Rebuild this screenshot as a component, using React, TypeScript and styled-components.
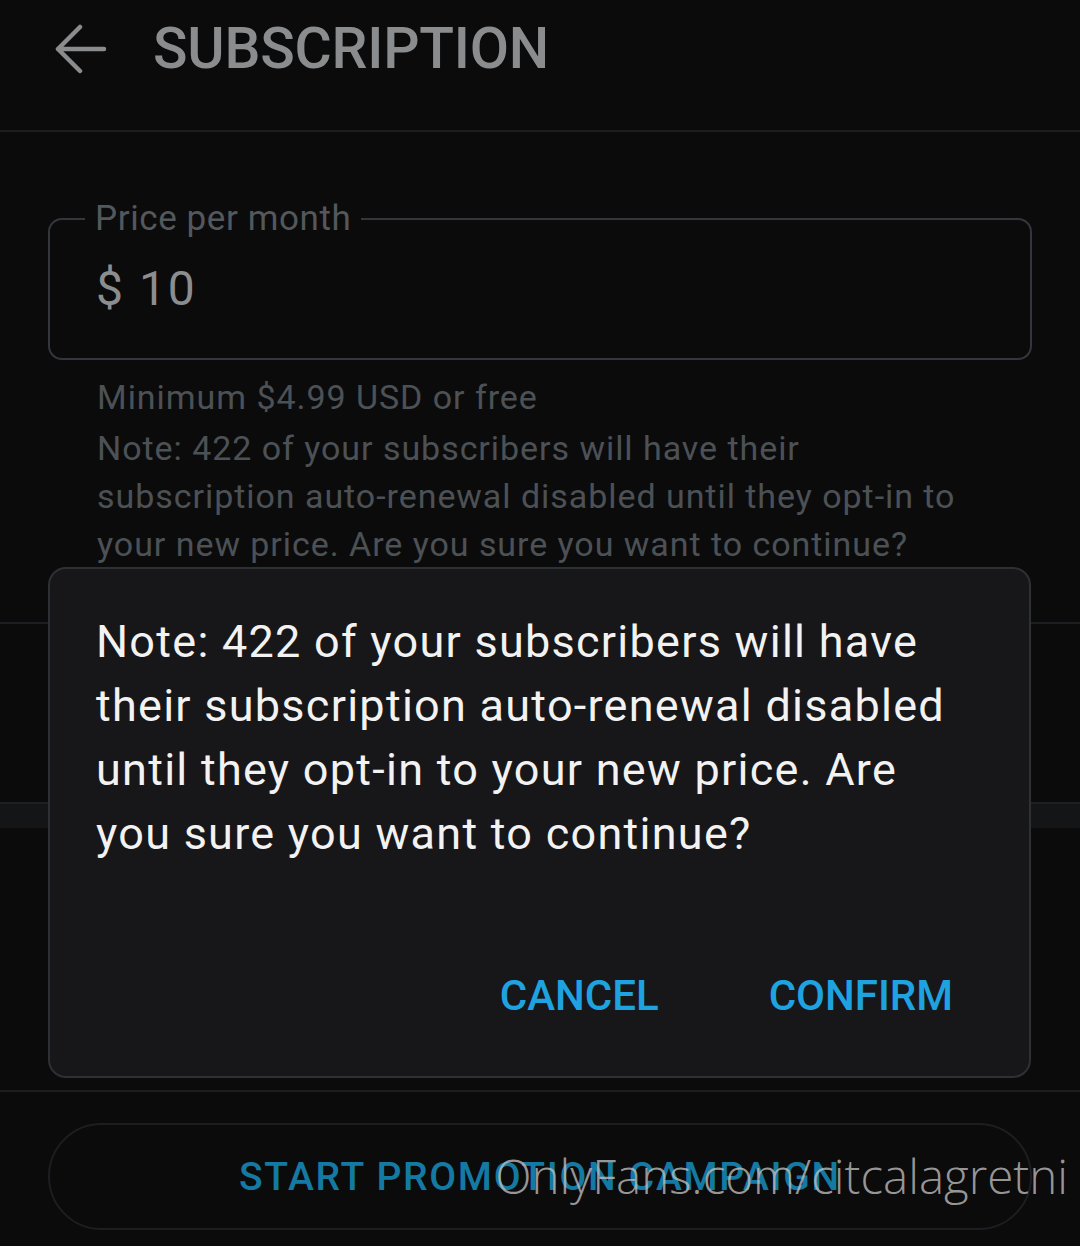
import React from "react";
import styled, { createGlobalStyle } from "styled-components";

const Global = createGlobalStyle`
  html, body { margin: 0; padding: 0; background: #0b0b0c; }
  body { font-family: Roboto, "Noto Sans", "Liberation Sans", sans-serif; }
  * { box-sizing: border-box; }
`;

const Page = styled.div`
  position: relative;
  width: 1080px;
  height: 1246px;
  overflow: hidden;
  background: #0b0b0c;
`;

const Header = styled.header`
  height: 132px;
  padding: 15px 0 0 55px;
  display: flex;
  align-items: flex-start;
  gap: 46px;
  border-bottom: 2px solid #1c1e22;
`;

const BackIcon = styled.svg`
  margin-top: 9px;
  flex: none;
`;

const Title = styled.h1`
  margin: 0;
  font-size: 57px;
  line-height: 67px;
  font-weight: 500;
  color: #8a8c8e;
  letter-spacing: -0.2px;
`;

const FormSection = styled.section`
  padding: 67px 48px 54px;
  border-bottom: 2px solid #1c1e21;
`;

const Field = styled.fieldset`
  margin: 0;
  padding: 0 0 0 35px;
  border: 2px solid #33373b;
  border-radius: 14px;
`;

const Legend = styled.legend`
  padding: 0 10px;
  font-size: 35px;
  line-height: 40px;
  letter-spacing: 0.6px;
  color: #53585d;
`;

const PriceRow = styled.div`
  margin: 22px 0 41px;
  padding-left: 11px;
  height: 56px;
  font-size: 48px;
  line-height: 56px;
  letter-spacing: 2px;
  color: #8b8d8f;
`;

const Helper = styled.div`
  margin-top: 13px;
  padding: 0 49px;
  font-size: 34px;
  line-height: 48px;
  letter-spacing: 0.95px;
  color: #4c5156;
`;

const HelperLine = styled.p<{ $gap?: number }>`
  margin: 0 0 ${(p) => p.$gap ?? 0}px;
`;

const EmptyRow = styled.div<{ $h: number; $line?: boolean }>`
  height: ${(p) => p.$h}px;
  border-bottom: ${(p) => (p.$line ? "2px solid #1c1e21" : "none")};
`;

const Band = styled.div`
  height: 26px;
  background: #131517;
  border-top: 2px solid #1d2023;
`;

const PromoWrap = styled.div`
  padding: 31px 48px 0;
`;

const PromoButton = styled.button`
  width: 100%;
  height: 107px;
  border: 2px solid #1c1e21;
  border-radius: 54px;
  background: transparent;
  font-family: Roboto, "Noto Sans", sans-serif;
  font-size: 39px;
  font-weight: 500;
  letter-spacing: 1.7px;
  color: #147aa3;
  padding: 0;
`;

const Dialog = styled.div`
  position: absolute;
  left: 48px;
  top: 567px;
  width: 983px;
  height: 511px;
  background: #171719;
  border: 2px solid #2d3034;
  border-radius: 18px;
  padding: 41px 0 0 46px;
`;

const DialogText = styled.p`
  margin: 0;
  width: 886px;
  font-size: 45px;
  line-height: 64px;
  letter-spacing: 1.26px;
  color: #f2f2f2;
`;

const DialogActions = styled.div`
  margin-top: 105px;
  display: flex;
  justify-content: flex-end;
  gap: 110px;
  padding-right: 76px;
`;

const ActionButton = styled.button`
  background: none;
  border: none;
  padding: 0;
  font-family: Roboto, "Noto Sans", sans-serif;
  font-size: 42px;
  line-height: 50px;
  font-weight: 500;
  color: #1fa3e0;
`;

const Watermark = styled.div`
  position: absolute;
  right: 12px;
  top: 1146px;
  font-family: "Open Sans", "DejaVu Sans", sans-serif;
  font-weight: 300;
  font-size: 47.5px;
  line-height: 60px;
  color: rgba(190, 190, 190, 0.78);
  white-space: nowrap;
`;

export default function App() {
  return (
    <Page>
      <Global />
      <Header>
        <BackIcon width="52" height="50" viewBox="0 0 52 50" fill="none">
          <path
            d="M3 25 H49 M25 3 L3 25 L25 47"
            stroke="#8a8c8e"
            strokeWidth="4.5"
            strokeLinecap="round"
            strokeLinejoin="round"
          />
        </BackIcon>
        <Title>SUBSCRIPTION</Title>
      </Header>
      <FormSection>
        <Field>
          <Legend>Price per month</Legend>
          <PriceRow>$ 10</PriceRow>
        </Field>
        <Helper>
          <HelperLine $gap={3}>Minimum $4.99 USD or free</HelperLine>
          <HelperLine>
            Note: 422 of your subscribers will have their subscription auto-renewal disabled until they
            opt-in to your new price. Are you sure you want to continue?
          </HelperLine>
        </Helper>
      </FormSection>
      <EmptyRow $h={178} />
      <Band />
      <EmptyRow $h={264} $line />
      <PromoWrap>
        <PromoButton>START PROMOTION CAMPAIGN</PromoButton>
      </PromoWrap>
      <Dialog>
        <DialogText>
          Note: 422 of your subscribers will have their subscription auto-renewal disabled until they
          opt-in to your new price. Are you sure you want to continue?
        </DialogText>
        <DialogActions>
          <ActionButton>CANCEL</ActionButton>
          <ActionButton>CONFIRM</ActionButton>
        </DialogActions>
      </Dialog>
      <Watermark>OnlyFans.com/citcalagretni</Watermark>
    </Page>
  );
}
